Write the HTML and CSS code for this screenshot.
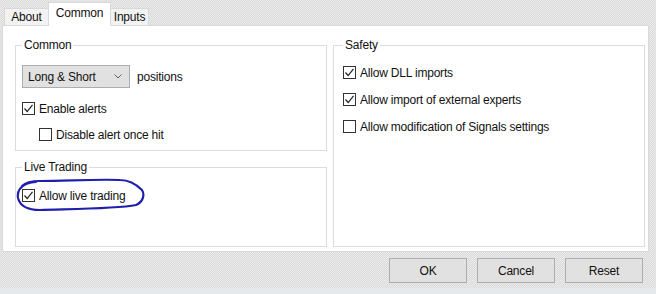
FILE: index.html
```html
<!DOCTYPE html>
<html>
<head>
<meta charset="utf-8">
<link rel="stylesheet" href="styles.css">
</head>
<body>
<div class="window">
  <div class="tabs">
    <div class="tab about">About</div>
    <div class="tab active">Common</div>
    <div class="tab inputs">Inputs</div>
  </div>
  <div class="panel">
    <div class="col">
      <fieldset class="group common">
        <legend>Common</legend>
        <div class="row">
          <div class="select">Long &amp; Short
            <svg class="chev" width="8" height="5" viewBox="0 0 8 5"><path d="M0.5 0.5 L4 4 L7.5 0.5" fill="none" stroke="#606060" stroke-width="1"/></svg>
          </div>
          <span class="after">positions</span>
        </div>
        <label class="check"><span class="box on"><svg width="11" height="11" viewBox="0 0 11 11"><path d="M1.5 5.5 L4.2 8.5 L9.5 1.8" fill="none" stroke="#222" stroke-width="1.2"/></svg></span>Enable alerts</label>
        <label class="check indent"><span class="box"></span>Disable alert once hit</label>
      </fieldset>
      <fieldset class="group live">
        <legend>Live Trading</legend>
        <label class="check"><span class="box on"><svg width="11" height="11" viewBox="0 0 11 11"><path d="M1.5 5.5 L4.2 8.5 L9.5 1.8" fill="none" stroke="#222" stroke-width="1.2"/></svg></span>Allow live trading</label>
        <svg class="scribble" width="132" height="40" viewBox="0 0 132 40"><path d="M6 10 C10 6 16 5 24 5 C50 5 80 3 104 4 C114 4 120 8 126 14 C129 19 127 26 120 29 C100 33 50 33 24 34 C12 34 4 30 2 22 C1 16 4 11 10 8 C13 7 16 6 20 6" fill="none" stroke="#1f1fae" stroke-width="2.2" stroke-linecap="round"/></svg>
      </fieldset>
    </div>
    <div class="col">
      <fieldset class="group safety">
        <legend>Safety</legend>
        <label class="check"><span class="box on"><svg width="11" height="11" viewBox="0 0 11 11"><path d="M1.5 5.5 L4.2 8.5 L9.5 1.8" fill="none" stroke="#222" stroke-width="1.2"/></svg></span>Allow DLL imports</label>
        <label class="check"><span class="box on"><svg width="11" height="11" viewBox="0 0 11 11"><path d="M1.5 5.5 L4.2 8.5 L9.5 1.8" fill="none" stroke="#222" stroke-width="1.2"/></svg></span>Allow import of external experts</label>
        <label class="check"><span class="box"></span>Allow modification of Signals settings</label>
      </fieldset>
    </div>
  </div>
  <div class="buttons">
    <button class="btn">OK</button>
    <button class="btn">Cancel</button>
    <button class="btn">Reset</button>
  </div>
</div>
<div class="footer"></div>
</body>
</html>
```
FILE: styles.css
```css
html, body {
  margin: 0;
  padding: 0;
}
body {
  width: 656px;
  height: 294px;
  overflow: hidden;
  font-family: "Liberation Sans", Arial, sans-serif;
  font-size: 12px;
  letter-spacing: -0.2px;
  color: #111;
  background-color: #e2e2e2;
  background-image: repeating-conic-gradient(#d9d9d9 0 25%, #ececec 0 50%);
  background-size: 2px 2px;
}
.window {
  padding: 0 7px 0 2px;
}
.tabs {
  display: flex;
  align-items: flex-end;
  height: 25px;
  padding-left: 2px;
}
.tab {
  height: 17px;
  line-height: 16px;
  text-align: center;
  background: #f2f2f2;
  border: 1px solid #d9d9d9;
  border-bottom: none;
  margin-right: -1px;
  box-sizing: border-box;
}
.tab.about {
  width: 45px;
}
.tab.inputs {
  width: 39px;
}
.tab.active {
  width: 63px;
  height: 24px;
  line-height: 20px;
  background: #fff;
  position: relative;
  z-index: 1;
  margin-bottom: -1px;
}
.panel {
  height: 227px;
  box-sizing: border-box;
  background: #fff;
  border: 1px solid #d9d9d9;
  display: grid;
  grid-template-columns: 312px 312px;
  column-gap: 6px;
  padding: 12px 4px 4px 12px;
}
.col {
  display: flex;
  flex-direction: column;
  gap: 9px;
}
.group {
  margin: 0;
  border: 1px solid #dcdcdc;
  padding: 0 6px;
  min-width: 0;
  position: relative;
}
.group legend {
  padding: 0 2px;
  margin-left: 0;
  line-height: 15px;
}
.common {
  height: 113px;
  box-sizing: border-box;
  padding-top: 12px;
}
.live {
  flex: 1;
  padding-top: 14px;
}
.safety {
  flex: 1;
  padding-top: 13px;
  padding-left: 9px;
}
.row {
  display: flex;
  align-items: center;
  gap: 7px;
  margin-bottom: 14px;
}
.select {
  width: 108px;
  height: 23px;
  box-sizing: border-box;
  background: #e1e1e1;
  border: 1px solid #adadad;
  display: flex;
  align-items: center;
  justify-content: space-between;
  padding: 0 7px 0 5px;
}
.chev {
  display: block;
}
.check {
  display: flex;
  align-items: center;
  height: 13px;
  margin-bottom: 13px;
  white-space: nowrap;
}
.safety .check {
  margin-bottom: 14px;
}
.check.indent {
  padding-left: 17px;
}
.box {
  width: 13px;
  height: 13px;
  box-sizing: border-box;
  border: 1px solid #333;
  background: #fff;
  margin-right: 4px;
  display: flex;
  align-items: center;
  justify-content: center;
  flex: none;
}
.box svg {
  display: block;
}
.scribble {
  position: absolute;
  left: 0;
  top: 1px;
}
.buttons {
  display: flex;
  justify-content: flex-end;
  gap: 10px;
  padding: 6px 6px 0 0;
}
.btn {
  width: 78px;
  height: 25px;
  font-family: "Liberation Sans", Arial, sans-serif;
  font-size: 12px;
  letter-spacing: -0.2px;
  color: #111;
  background: #e1e1e1;
  border: 1px solid #adadad;
  padding: 0;
}
.footer {
  position: absolute;
  left: 0;
  right: 0;
  bottom: 0;
  height: 6px;
  background: #e6e9ec;
}
```
